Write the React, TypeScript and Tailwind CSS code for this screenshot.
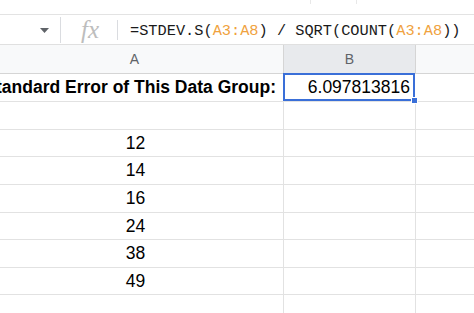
import React from "react";

const rowHeights = [28, 28, 27, 28, 28, 27, 28, 27, 28];
const values = ["", "", "12", "14", "16", "24", "38", "49", ""];

export default function App() {
  return (
    <div className="w-[474px] h-[313px] overflow-hidden bg-white" style={{ fontFamily: '"Liberation Sans", Arial, sans-serif' }}>
      <div className="h-[15px] border-b border-[#e3e3e3] flex">
        <div className="ml-[310px] w-px h-[4px] bg-[#e8e8e8]" />
        <div className="ml-[45px] w-px h-[4px] bg-[#e8e8e8]" />
      </div>
      <div className="h-[30px] border-b border-[#e0e0e0] flex items-center">
        <div className="w-[60px] flex justify-end pr-[11px] pt-[2px]">
          <svg width="9" height="5" viewBox="0 0 9 5"><path d="M0 0 L9 0 L4.5 5 Z" fill="#5f6368" /></svg>
        </div>
        <div className="w-px h-[26px] bg-[#dadce0]" />
        <div className="w-[56px] flex justify-center pl-[2px] text-[25px] italic text-[#bdbdbd] leading-none" style={{ fontFamily: '"Liberation Serif", serif' }}>fx</div>
        <div className="w-px h-[20px] bg-[#dadce0]" />
        <div className="pl-[12px] pt-[3px] text-[15.3px] text-[#1a1a1a] whitespace-nowrap" style={{ fontFamily: '"Liberation Mono", monospace' }}>
          =STDEV.S(<span className="text-[#f0a23e]">A3:A8</span>) / SQRT(COUNT(<span className="text-[#f0a23e]">A3:A8</span>))
        </div>
      </div>
      <div className="flex h-[29px] border-b border-[#d5d5d5] text-[14px] text-[#5f6368]">
        <div className="w-[284px] shrink-0 bg-[#f8f9fa] border-r border-[#d5d5d5] flex items-center justify-center pr-[2px]">
          <span className="ml-[-12px]">A</span>
        </div>
        <div className="w-[132px] shrink-0 bg-[#e8eaed] border-r border-[#d5d5d5] flex items-center justify-center">B</div>
        <div className="flex-1 bg-[#f8f9fa]" />
      </div>
      {rowHeights.map((h, i) => (
        <div key={i} className="flex border-b border-[#e2e2e2]" style={{ height: h }}>
          {i === 0 ? (
            <div className="w-[284px] shrink-0 border-r border-[#e2e2e2] flex items-center justify-end pr-[7px] text-[17.5px] font-bold text-black whitespace-nowrap overflow-hidden">
              Standard Error of This Data Group:
            </div>
          ) : (
            <div className="w-[284px] shrink-0 border-r border-[#e2e2e2] flex items-center justify-center text-[17.5px] text-black">
              <span className="ml-[-12px]">{values[i]}</span>
            </div>
          )}
          {i === 0 ? (
            <div className="relative w-[132px] shrink-0 border-2 border-[#3a6fd8] -mt-px -ml-px flex items-center justify-end pr-[3px] text-[17.5px] text-black">
              6.097813816
              <div className="absolute right-[-5px] bottom-[-5px] w-[7px] h-[7px] bg-[#3a6fd8] border border-white" />
            </div>
          ) : (
            <div className="w-[132px] shrink-0 border-r border-[#e2e2e2]" />
          )}
          <div className="flex-1" />
        </div>
      ))}
    </div>
  );
}
